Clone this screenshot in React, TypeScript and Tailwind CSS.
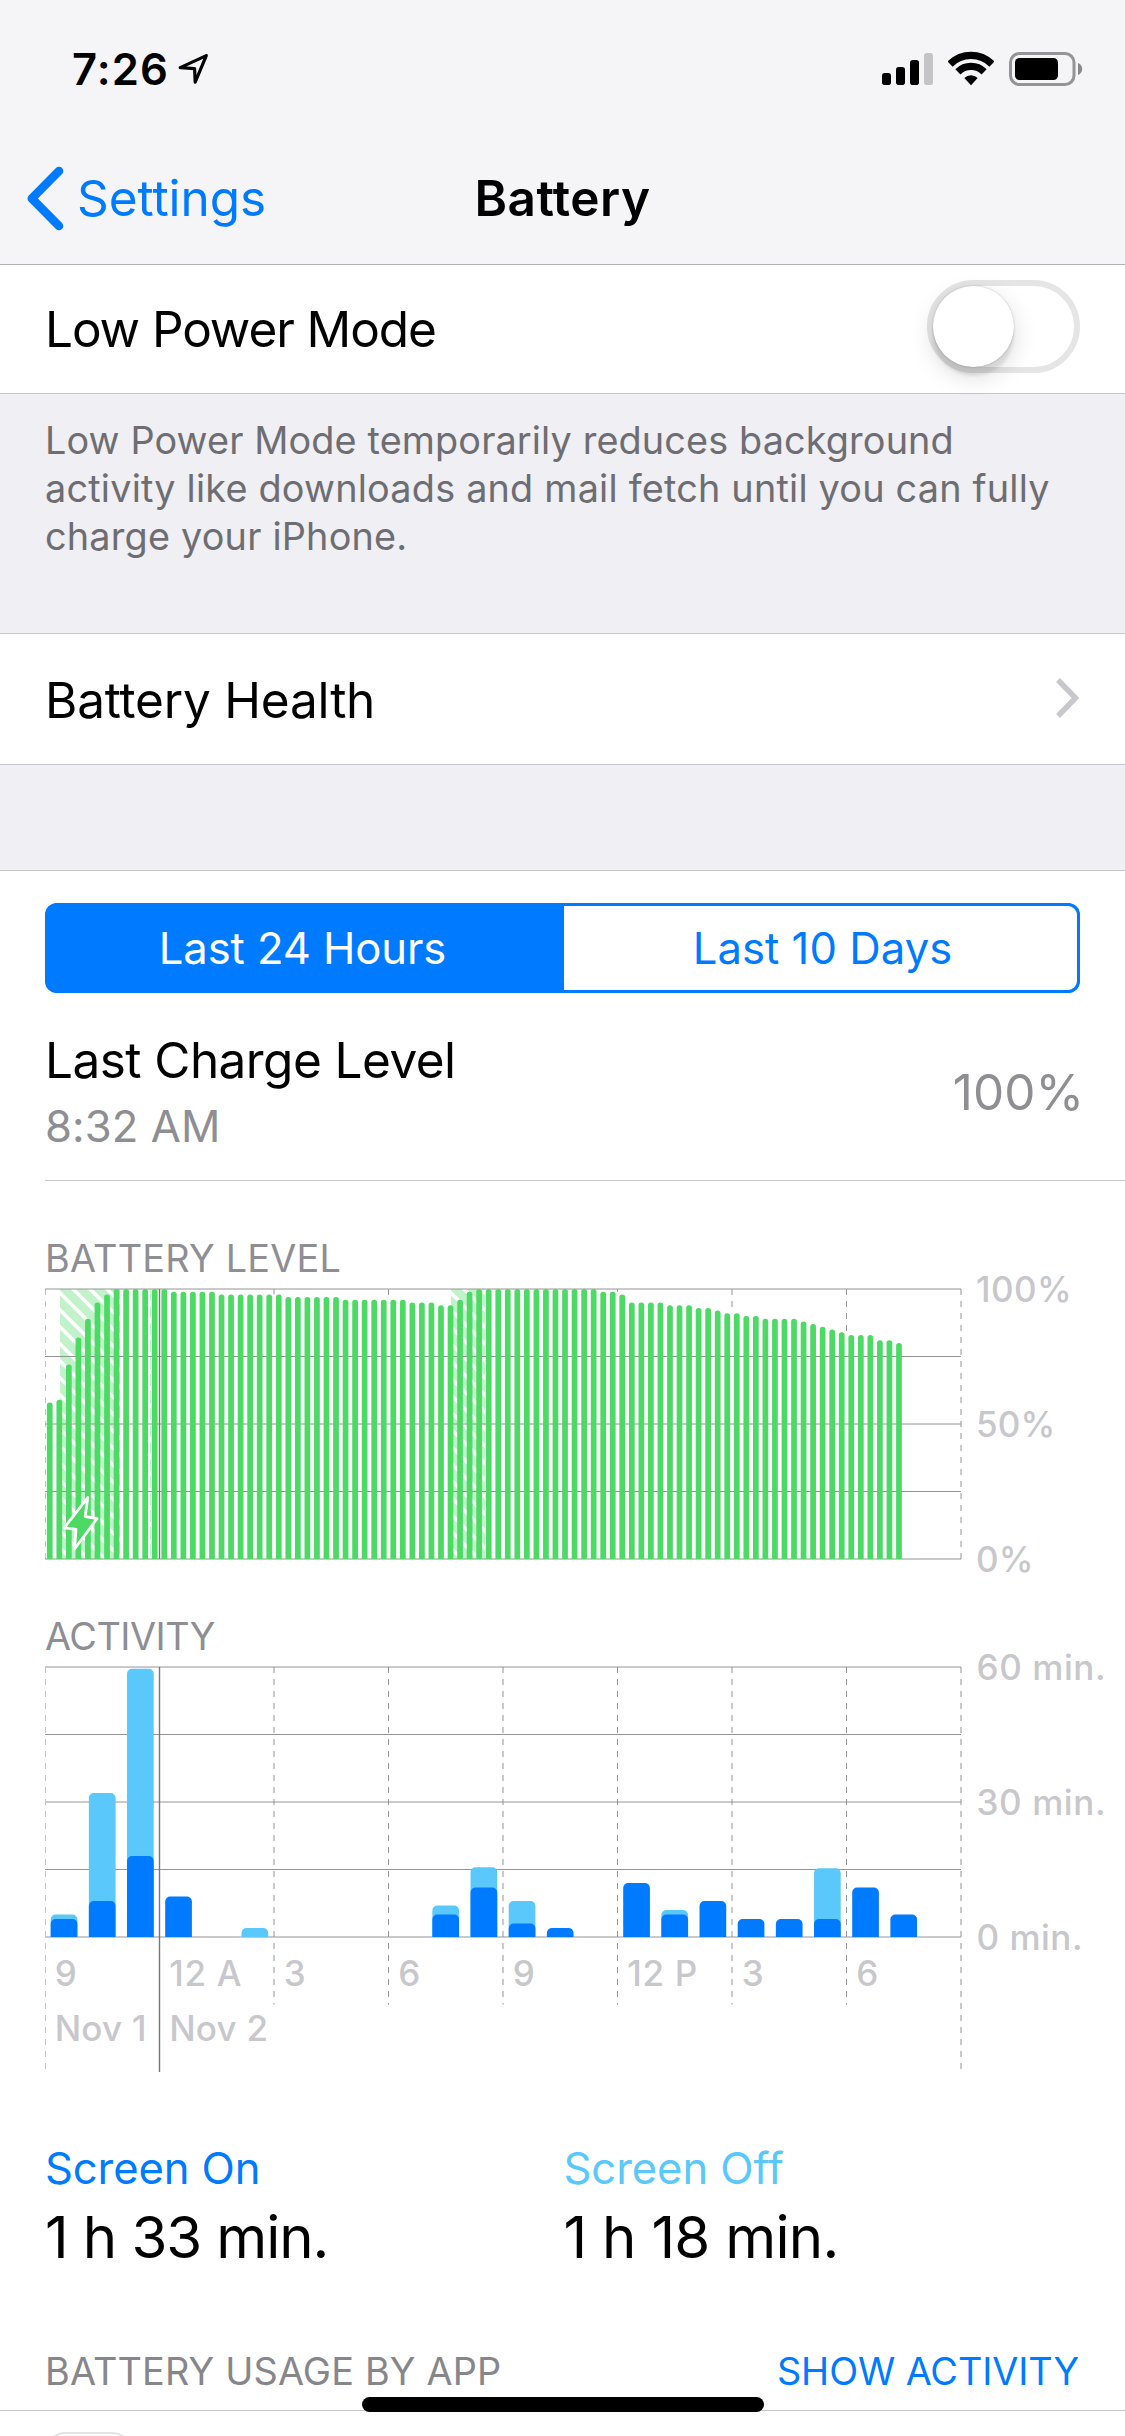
import React, { useState } from 'react';

interface HourUsage {
  total: number;
  screenOn: number;
}

interface HourMark {
  hour: number;
  label: string;
}

const CHART_LEFT = 45;
const CHART_WIDTH = 916;
const CHART_HEIGHT = 270;
const CHART_RIGHT = CHART_LEFT + CHART_WIDTH;
const HOUR_WIDTH = CHART_WIDTH / 24;
const LEVEL_STEP = CHART_WIDTH / 96;
const MIDNIGHT_X = CHART_LEFT + HOUR_WIDTH * 3;

// one reading per 15 minutes, in percent
const levels: number[] = [
  58, 59, 72, 82, 89, 95, 98, 100, 100, 100, 100, 100, 100,
  99, 99, 99, 99, 99, 98, 98, 98, 98, 98, 98, 98,
  97, 97, 97, 97, 97, 97, 96, 96, 96, 96, 96, 96, 96,
  95, 95, 95, 94, 94, 96, 99,
  100, 100, 100, 100, 100, 100, 100, 100, 100, 100, 100, 100, 100,
  99, 99, 98, 95, 95, 95, 95, 94, 94, 94, 93, 93, 92, 91, 91, 90, 90,
  89, 89, 89, 89, 88, 87, 86, 85, 84, 83, 83, 83, 81, 81, 80,
];

// minutes per hour
const usage: HourUsage[] = [
  { total: 5, screenOn: 4 },
  { total: 32, screenOn: 8 },
  { total: 59.6, screenOn: 18 },
  { total: 9, screenOn: 9 },
  { total: 0, screenOn: 0 },
  { total: 2, screenOn: 0 },
  { total: 0, screenOn: 0 },
  { total: 0, screenOn: 0 },
  { total: 0, screenOn: 0 },
  { total: 0, screenOn: 0 },
  { total: 7, screenOn: 5 },
  { total: 15.5, screenOn: 11 },
  { total: 8, screenOn: 3 },
  { total: 2, screenOn: 2 },
  { total: 0, screenOn: 0 },
  { total: 12, screenOn: 12 },
  { total: 6, screenOn: 5 },
  { total: 8, screenOn: 8 },
  { total: 4, screenOn: 4 },
  { total: 4, screenOn: 4 },
  { total: 15.3, screenOn: 4 },
  { total: 11, screenOn: 11 },
  { total: 5, screenOn: 5 },
  { total: 0, screenOn: 0 },
];

const hourMarks: HourMark[] = [
  { hour: 0, label: '9' },
  { hour: 3, label: '12 A' },
  { hour: 6, label: '3' },
  { hour: 9, label: '6' },
  { hour: 12, label: '9' },
  { hour: 15, label: '12 P' },
  { hour: 18, label: '3' },
  { hour: 21, label: '6' },
];

// bar with rounded top corners and a flat base
const barPath = (x: number, width: number, height: number, radius: number) => {
  const r = Math.min(radius, height);
  const top = CHART_HEIGHT - height;
  return `M${x} ${CHART_HEIGHT}V${top + r}a${r} ${r} 0 0 1 ${r} ${-r}h${width - r * 2}a${r} ${r} 0 0 1 ${r} ${r}V${CHART_HEIGHT}z`;
};

const StatusBar: React.FC = () => (
  <div className="flex h-[138px] items-center justify-between pl-[72px] pr-[42px]">
    <div className="flex items-center">
      <span className="pt-px text-[43.6px] font-semibold tracking-[1.1px]">7:26</span>
      <svg className="ml-[8px]" width="34" height="34" viewBox="0 0 34 34" fill="none" stroke="#000" strokeWidth="3.2" strokeLinejoin="round">
        <path d="M29.3 3.6 3.2 15.6 17.6 16.6 18.2 30.2z" />
      </svg>
    </div>
    <div className="flex items-center gap-[15px]">
      <svg width="51" height="36" viewBox="0 0 51 36">
        <rect x="0" y="22" width="9" height="12" rx="2.8" />
        <rect x="14" y="16" width="9" height="18" rx="2.8" />
        <rect x="28" y="9" width="9" height="25" rx="2.8" />
        <rect x="42" y="2" width="9" height="32" rx="2.8" fill="#c4c4c6" />
      </svg>
      <svg width="46" height="36" viewBox="0 0 46 36">
        <g fill="none" stroke="#000" strokeWidth="7.2">
          <path d="M2.1 13.1a29.5 29.5 0 0 1 41.8 0" />
          <path d="M9.9 20.9a18.5 18.5 0 0 1 26.2 0" />
        </g>
        <path d="M23 34.2 16.3 27a9.8 9.8 0 0 1 13.4 0z" />
      </svg>
      <svg width="74" height="36" viewBox="0 0 74 36">
        <rect x="1.5" y="2.5" width="63.5" height="31" rx="9" fill="none" stroke="#949496" strokeWidth="3" />
        <rect x="6" y="7" width="43" height="22" rx="4.5" />
        <path d="M69 12c5.600 2 5.600 10 0 12z" fill="#88888a" />
      </svg>
    </div>
  </div>
);

const NavBar: React.FC = () => (
  <div className="grid h-[126px] grid-cols-[1fr_auto_1fr] items-center pb-[6px]">
    <button type="button" className="flex items-center pl-[26px] text-[#007aff]">
      <svg width="40" height="66" viewBox="0 0 40 66" fill="none" stroke="currentColor" strokeWidth="8.6" strokeLinecap="round" strokeLinejoin="round">
        <path d="M33 6 5.800 33.500 33 61" />
      </svg>
      <span className="ml-[11px] text-[49.5px] tracking-[-0.05px]">Settings</span>
    </button>
    <h1 className="text-[49.5px] font-semibold tracking-[0.45px]">Battery</h1>
    <span />
  </div>
);

interface ToggleProps {
  checked: boolean;
  onChange: (checked: boolean) => void;
}

const Toggle: React.FC<ToggleProps> = ({ checked, onChange }) => (
  <button
    type="button"
    role="switch"
    aria-checked={checked}
    aria-label="Low Power Mode"
    onClick={() => onChange(!checked)}
    className={`mb-[5px] flex h-[93px] w-[153px] rounded-full border-[6px] ${
      checked ? 'justify-end border-[#4cd964] bg-[#4cd964]' : 'justify-start border-[#e5e5e5] bg-white'
    }`}
  >
    <span className="size-[81px] rounded-full bg-white shadow-[0_9px_24px_rgba(0,0,0,0.15),0_9px_3px_rgba(0,0,0,0.08),0_0_2px_rgba(0,0,0,0.25)]" />
  </button>
);

const GridLines: React.FC = () => (
  <g stroke="#949494" strokeWidth="1">
    {[0, 1, 2, 3, 4].map((i) => (
      <path key={i} d={`M${CHART_LEFT} ${i * 67.5}H${CHART_RIGHT}`} />
    ))}
  </g>
);

const axisLabel = 'fill-[#c7c7cc] text-[35px] font-medium';

const BatteryLevelChart: React.FC = () => (
  <svg className="block overflow-visible" width="1125" height="338" viewBox="0 -11 1125 338">
    <defs>
      <pattern id="charging" width="17" height="17" patternUnits="userSpaceOnUse" patternTransform="translate(60 4)">
        <rect width="17" height="17" fill="#c1f2ca" />
        <path d="M-3-3 20 20M-3 14 3 20M14-3 20 3" stroke="#fff" strokeWidth="3.7" />
      </pattern>
    </defs>
    {[6, 9, 12, 15, 18, 21, 24].map((hour) => (
      <path key={hour} d={`M${CHART_LEFT + hour * HOUR_WIDTH} 0V270`} stroke="#949494" strokeDasharray="6 6" />
    ))}
    {/* hour marks stay visible only above the bars */}
    {levels.map((level, i) => (
      <rect
        key={i}
        x={CHART_LEFT + LEVEL_STEP * i - 0.5}
        y={CHART_HEIGHT - level * 2.7}
        width={LEVEL_STEP + 1}
        height={level * 2.7}
        fill="#fff"
      />
    ))}
    <path d="M45.500 0V270" stroke="#c4c4c4" strokeDasharray="6 6" />
    <rect x="60" width="60" height="270" fill="url(#charging)" />
    <rect x="451" width="34" height="270" fill="url(#charging)" />
    <path d="M150.500 0V270" stroke="#c1f2ca" strokeDasharray="12 5" />
    <GridLines />
    {levels.map((level, i) => (
      <path
        key={i}
        d={barPath(CHART_LEFT + LEVEL_STEP * (i + 0.2), LEVEL_STEP * 0.6, level * 2.7, 2.8)}
        fill="#4cd964"
      />
    ))}
    <path d={`M${MIDNIGHT_X} 0V270`} stroke="#777" strokeWidth="1.4" />
    <path
      d="M87.800 208.500 64.300 238.700 76 240.500 74.500 260 97 229.700 85.200 227.500z"
      fill="#4cd964"
      stroke="#fff"
      strokeWidth="2.8"
      strokeLinejoin="round"
    />
    <g className={axisLabel}>
      <text x="976" y="12.500" letterSpacing="0.4">100%</text>
      <text x="976" y="147.500" letterSpacing="0.1">50%</text>
      <text x="976" y="282.500" letterSpacing="0.1">0%</text>
    </g>
  </svg>
);

const ActivityChart: React.FC = () => (
  <svg className="block overflow-visible" width="1125" height="482" viewBox="0 -11 1125 482">
    <GridLines />
    <path d="M45.500 0V403" stroke="#c4c4c4" strokeDasharray="6 6" />
    {[6, 9, 12, 15, 18, 21].map((hour) => (
      <path key={hour} d={`M${CHART_LEFT + hour * HOUR_WIDTH} 0V337.500`} stroke="#949494" strokeDasharray="6 6" />
    ))}
    <path d={`M${CHART_RIGHT} 0V403`} stroke="#949494" strokeDasharray="6 6" />
    {usage.map(({ total, screenOn }, i) => {
      const x = CHART_LEFT + HOUR_WIDTH * i + 5.7;
      return (
        <React.Fragment key={i}>
          {total > screenOn && <path d={barPath(x, 26.7, total * 4.5, 5)} fill="#5ac8fa" />}
          {screenOn > 0 && <path d={barPath(x, 26.7, screenOn * 4.5, 5)} fill="#007aff" />}
        </React.Fragment>
      );
    })}
    <path d={`M${MIDNIGHT_X} 0V405`} stroke="#777" strokeWidth="1.4" />
    <g className={axisLabel}>
      {hourMarks.map(({ hour, label }) => (
        <text key={hour} x={CHART_LEFT + hour * HOUR_WIDTH + 9.7} y="319" letterSpacing="0.7">
          {label}
        </text>
      ))}
      <text x="54.700" y="374" letterSpacing="0.2">Nov 1</text>
      <text x="169.200" y="374" letterSpacing="0.2">Nov 2</text>
      <text x="976.500" y="12.500" letterSpacing="0.6">60 min.</text>
      <text x="976.500" y="147.500" letterSpacing="0.6">30 min.</text>
      <text x="976.500" y="282.500" letterSpacing="0.5">0 min.</text>
    </g>
  </svg>
);

export default function App() {
  const [lowPower, setLowPower] = useState(false);
  const [range, setRange] = useState<'day' | 'week'>('day');

  const segmentClass = (active: boolean) =>
    `border-[3px] border-[#007aff] pt-[2px] text-[43.6px] ${active ? 'bg-[#007aff] text-white' : 'bg-white text-[#007aff]'}`;

  return (
    <div className="relative h-[2436px] w-[1125px] overflow-hidden bg-white font-['Inter',sans-serif] text-black">
      <header className="border-b border-[#b2b2b2] bg-[#f5f5f7]">
        <StatusBar />
        <NavBar />
      </header>

      <div className="flex h-[129px] items-center justify-between border-b border-[#c8c7cc] pl-[45px] pr-[45px]">
        <span className="text-[49.5px] tracking-[-1.08px]">Low Power Mode</span>
        <Toggle checked={lowPower} onChange={setLowPower} />
      </div>

      <p className="h-[240px] whitespace-nowrap border-b border-[#c8c7cc] bg-[#efeff4] pl-[45px] pt-[22px] text-[37.8px] leading-[48px] text-[#6d6d72]">
        <span className="tracking-[0.13px]">Low Power Mode temporarily reduces background</span>
        <br />
        <span className="tracking-[0.21px]">activity like downloads and mail fetch until you can fully</span>
        <br />
        <span className="tracking-[0.2px]">charge your iPhone.</span>
      </p>

      <div className="flex h-[131px] items-center justify-between border-b border-[#c8c7cc] pl-[45px] pr-[43px]">
        <span className="pt-[2px] text-[49.5px] tracking-[-0.2px]">Battery Health</span>
        <svg className="mb-[3px]" width="28" height="42" viewBox="0 0 28 42" fill="none" stroke="#c7c7cc" strokeWidth="5.400">
          <path d="M4 3 21.500 21 4 39" />
        </svg>
      </div>

      <div className="h-[106px] border-b border-[#c8c7cc] bg-[#efeff4]" />

      <div className="px-[45px] pt-[32px]">
        <div className="grid h-[90px] grid-cols-[519px_1fr] overflow-hidden rounded-[12px] bg-[#007aff]">
          <button
            type="button"
            className={`rounded-l-[12px] border-r-0 pr-[7px] tracking-[-0.1px] ${segmentClass(range === 'day')}`}
            onClick={() => setRange('day')}
          >
            Last 24 Hours
          </button>
          <button
            type="button"
            className={`rounded-r-[12px] border-l-0 pl-[4px] tracking-[0.05px] ${segmentClass(range === 'week')}`}
            onClick={() => setRange('week')}
          >
            Last 10 Days
          </button>
        </div>
      </div>

      <div className="ml-[45px] flex h-[188px] items-start justify-between border-b border-[#c8c7cc] pr-[41px] pt-[34px]">
        <div className="leading-[66px]">
          <div className="text-[49.5px] tracking-[-0.55px]">Last Charge Level</div>
          <div className="pt-px text-[43.6px] tracking-[0.09px] text-[#8e8e93]">8:32 AM</div>
        </div>
        <span className="text-[49.5px] leading-[130px] text-[#8e8e93]">100%</span>
      </div>

      <section className="pt-[57px]">
        <h2 className="pl-[45px] text-[37.8px] leading-[40px] tracking-[0.23px] text-[#8e8e93]">BATTERY LEVEL</h2>
        <BatteryLevelChart />
        <h2 className="pl-[45px] text-[37.8px] leading-[40px] tracking-[-0.5px] text-[#8e8e93]">ACTIVITY</h2>
        <ActivityChart />
      </section>

      <div className="grid h-[213px] grid-cols-2 pl-[45px] pr-[45px] pt-px">
        <div>
          <div className="text-[43.6px] leading-[60px] tracking-[-0.13px] text-[#007aff]">Screen On</div>
          <div className="pt-[3px] text-[58.200px] leading-[70px] tracking-[-1.1px]">1 h 33 min.</div>
        </div>
        <div className="pl-px">
          <div className="text-[43.6px] leading-[60px] tracking-[-0.1px] text-[#5ac8fa]">Screen Off</div>
          <div className="pt-[3px] text-[58.200px] leading-[70px] tracking-[-0.73px]">1 h 18 min.</div>
        </div>
      </div>

      <div className="flex h-[60px] items-start justify-between border-b border-[#c8c7cc] pl-[45px] pr-[46px] text-[37.8px] leading-[40px]">
        <span className="tracking-[0.17px] text-[#86868b]">BATTERY USAGE BY APP</span>
        <button type="button" className="tracking-[-0.08px] text-[#007aff]">SHOW ACTIVITY</button>
      </div>
      <div className="ml-[45px] mt-[21px] size-[87px] rounded-[20px] border-2 border-[#e4e4e6]" />

      {/* home indicator */}
      <div className="absolute bottom-[24px] left-[362px] h-[15px] w-[402px] rounded-full bg-black" />
    </div>
  );
}
